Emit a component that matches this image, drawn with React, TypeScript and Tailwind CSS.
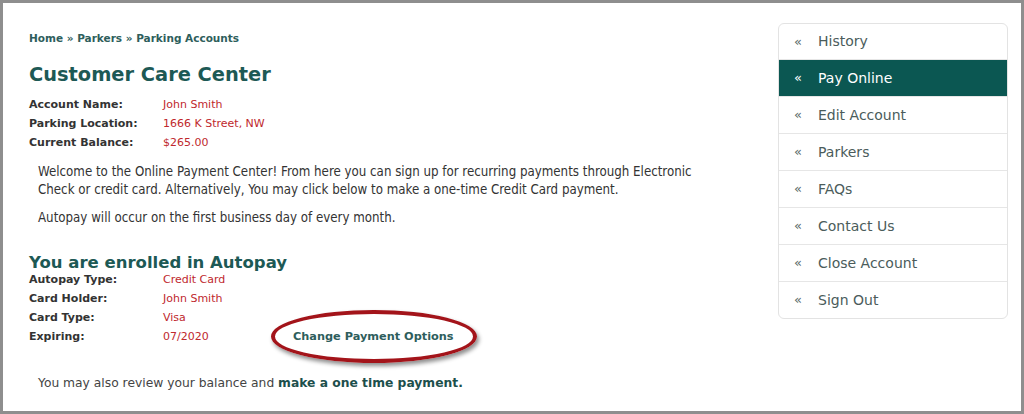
const verdana = "font-['DejaVu_Sans',Verdana,sans-serif]";
const tahoma = "font-['DejaVu_Sans_Condensed',Tahoma,sans-serif]";

const account = [
  ["Account Name:", "John Smith"],
  ["Parking Location:", "1666 K Street, NW"],
  ["Current Balance:", "$265.00"],
];

const menu = ["History", "Pay Online", "Edit Account", "Parkers", "FAQs", "Contact Us", "Close Account", "Sign Out"];

function Row({ label, value, extra }: { label: string; value: string; extra?: React.ReactNode }) {
  return (
    <div className="flex items-center h-[19px]">
      <span className="w-[134px] text-[11px] font-bold text-[#333]">{label}</span>
      <span className="w-[110px] text-[11px] text-[#c0282d]">{value}</span>
      {extra}
    </div>
  );
}

export default function App() {
  return (
    <div className={`w-[1024px] h-[414px] bg-white border-[3px] border-[#8e8e8e] flex ${verdana} overflow-hidden`}>
      {/* Main column */}
      <div className="w-[775px] pl-[26px] pt-[27px]">
        <div className="text-[10.5px] font-bold text-[#2e5e5c] leading-[16px]">
          Home » Parkers » Parking Accounts
        </div>
        <h1 className="mt-[17px] text-[19.4px] font-bold text-[#1d5955] leading-[24px]">Customer Care Center</h1>
        <div className="mt-[9px]">
          {account.map(([l, v]) => (
            <Row key={l} label={l} value={v} />
          ))}
        </div>
        <div className={`pl-[9px] mt-[10px] text-[13.2px] text-[#333] ${tahoma}`}>
          <p className="leading-[18px]">
            Welcome to the Online Payment Center! From here you can sign up for recurring payments through Electronic
            <br />
            Check or credit card. Alternatively, You may click below to make a one-time Credit Card payment.
          </p>
          <p className="mt-[10px] leading-[18px]">Autopay will occur on the first business day of every month.</p>
        </div>
        <h2 className="mt-[26px] text-[16.5px] font-bold text-[#1d5955] leading-[20px]">You are enrolled in Autopay</h2>
        <div className="-mt-[2px]">
          <Row label="Autopay Type:" value="Credit Card" />
          <Row label="Card Holder:" value="John Smith" />
          <Row label="Card Type:" value="Visa" />
          <Row
            label="Expiring:"
            value="07/2020"
            extra={
              <span className="relative ml-[20px] text-[11.3px] font-bold text-[#2e5e5c]">
                Change Payment Options
                <span className="absolute left-[-22px] right-[-23px] top-[-19px] bottom-[-17px] rounded-[50%] border-[4px] border-[#a3141a] shadow-[2px_3px_4px_rgba(0,0,0,0.45)]" />
              </span>
            }
          />
        </div>
        <p className="mt-[27px] ml-[9px] text-[12.3px] text-[#444]">
          You may also review your balance and <span className="font-bold text-[#1d4f4c]">make a one time payment.</span>
        </p>
      </div>

      {/* Sidebar menu */}
      <div className="pt-[20px]">
        <ul className="w-[230px] border border-[#e3e3e3] rounded-[6px] overflow-hidden">
          {menu.map((item, i) => {
            const active = item === "Pay Online";
            return (
              <li
                key={item}
                className={`flex items-center pl-[15px] text-[14px] ${i > 0 ? "h-[37px] border-t border-[#e6e6e6]" : "h-[35px]"} ${
                  active ? "bg-[#0b5752] text-white border-[#0b5752]" : "text-[#4b5c5b]"
                }`}
              >
                <span className={`w-[24px] text-[13px] ${active ? "text-white" : "text-[#5a6b6a]"}`}>«</span>
                {item}
              </li>
            );
          })}
        </ul>
      </div>
    </div>
  );
}
